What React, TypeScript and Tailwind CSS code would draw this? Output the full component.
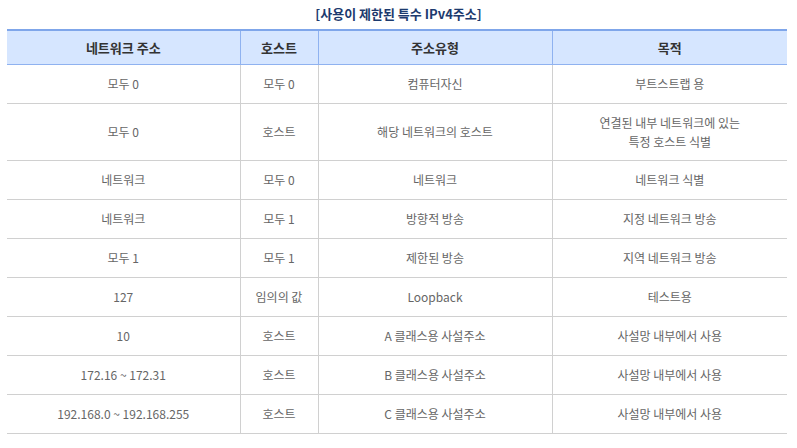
const rows: [string, string, string, string][] = [
  ["모두 0", "모두 0", "컴퓨터자신", "부트스트랩 용"],
  ["모두 0", "호스트", "해당 네트워크의 호스트", "연결된 내부 네트워크에 있는\n특정 호스트 식별"],
  ["네트워크", "모두 0", "네트워크", "네트워크 식별"],
  ["네트워크", "모두 1", "방향적 방송", "지정 네트워크 방송"],
  ["모두 1", "모두 1", "제한된 방송", "지역 네트워크 방송"],
  ["127", "임의의 값", "Loopback", "테스트용"],
  ["10", "호스트", "A 클래스용 사설주소", "사설망 내부에서 사용"],
  ["172.16 ~ 172.31", "호스트", "B 클래스용 사설주소", "사설망 내부에서 사용"],
  ["192.168.0 ~ 192.168.255", "호스트", "C 클래스용 사설주소", "사설망 내부에서 사용"],
];

const headers = ["네트워크 주소", "호스트", "주소유형", "목적"];

export default function App() {
  return (
    <div
      className="w-[797px] h-[448px] bg-white px-[7px] pt-[5px]"
      style={{ fontFamily: '"Noto Sans CJK KR", "Noto Sans", sans-serif' }}
    >
      <p className="text-center text-[13px] font-bold text-[#1c3a6e] leading-[18px] h-[24px]">
        [사용이 제한된 특수 IPv4주소]
      </p>
      <table className="w-[780px] table-fixed border-collapse">
        <colgroup>
          <col className="w-[233px]" />
          <col className="w-[78px]" />
          <col className="w-[234px]" />
          <col className="w-[235px]" />
        </colgroup>
        <thead>
          <tr className="bg-[#d6e6ff] border-t-2 border-t-[#7fa6ea] border-b border-b-[#8fb2f0]">
            {headers.map((h, i) => (
              <th
                key={h}
                className={`h-[34px] p-0 text-[13px] font-bold text-[#333] ${i > 0 ? "border-l border-l-[#8fb2f0]" : ""}`}
              >
                {h}
              </th>
            ))}
          </tr>
        </thead>
        <tbody>
          {rows.map((r, ri) => (
            <tr key={ri} className="border-b border-b-[#d0d0d0]">
              {r.map((c, ci) => (
                <td
                  key={ci}
                  className={`${ri === 1 ? "h-[57px]" : "h-[39px]"} p-0 text-center text-[12px] leading-[19px] text-[#666] whitespace-pre-line ${ci > 0 ? "border-l border-l-[#d0d0d0]" : ""}`}
                >
                  {c}
                </td>
              ))}
            </tr>
          ))}
        </tbody>
      </table>
    </div>
  );
}
